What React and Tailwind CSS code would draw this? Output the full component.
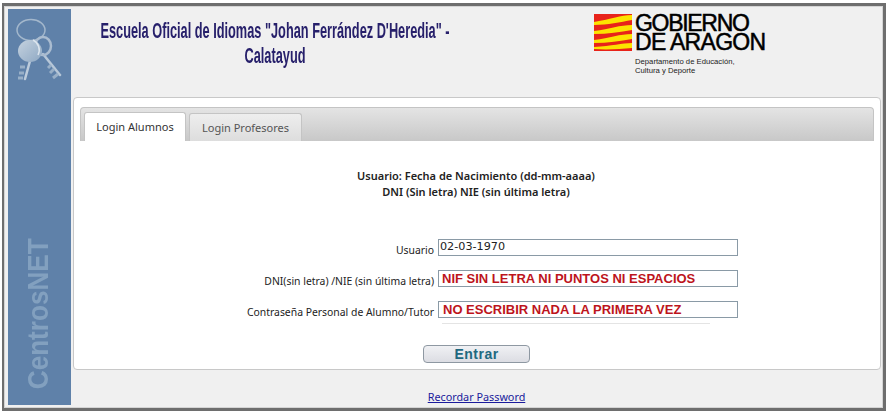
const labelFont = "font-['Noto_Sans',sans-serif]";

function KeysIcon() {
  return (
    <svg width="50" height="72" viewBox="0 0 50 72" fill="none" className="mt-[6px] ml-[8px] blur-[0.5px]">
      <defs>
        <linearGradient id="keyFill" x1="0" y1="0" x2="1" y2="1">
          <stop offset="0" stopColor="#c5d2df" />
          <stop offset="1" stopColor="#8ea8c3" />
        </linearGradient>
      </defs>
      {/* ring */}
      <ellipse cx="15" cy="15" rx="14" ry="10.5" stroke="#a3b7cc" strokeWidth="1.5" />
      {/* right key */}
      <path d="M27 39 L44 60" stroke="#b7c7d8" strokeWidth="2.5" strokeLinecap="round" />
      <path d="M35 50 l-3 3 M38 54 l-4 4 M42 59 l-5 4" stroke="#98afc7" strokeWidth="3" />
      <ellipse cx="27" cy="31" rx="8" ry="9" stroke="#aabcd0" strokeWidth="2.5" />
      {/* left key */}
      <path d="M14 46 L9 64" stroke="#bccbdb" strokeWidth="2.5" strokeLinecap="round" />
      <path d="M9 52 h-5 M8 58 h-5 M7 63 h-5" stroke="#98afc7" strokeWidth="3" />
      <ellipse cx="14" cy="36" rx="12" ry="11" fill="url(#keyFill)" />
      <path d="M17 25 a11 11 0 0 1 5 15" stroke="#dbe4ed" strokeWidth="1.5" />
    </svg>
  );
}

function AragonFlag() {
  return (
    <svg width="38" height="37" viewBox="0 0 38 37" className="shrink-0">
      <rect width="38" height="37" fill="#e8231a" />
      <path d="M38 1 C26 1 18 5 0 8 V11 C14 11 26 8 38 6 Z" fill="#fce300" />
      <path d="M38 11 C26 11 16 15 0 17 V20 C14 20 26 18 38 16 Z" fill="#fce300" />
      <path d="M38 20 C26 20 16 24 0 26 V29 C14 29 26 27 38 25 Z" fill="#fce300" />
      <path d="M38 29 C28 29 18 32 0 33 V35 C14 36 26 35 38 34 Z" fill="#fce300" />
    </svg>
  );
}

function FormRow({ label, children }) {
  return (
    <div className="flex items-end h-[17px]">
      <label className={`w-[358px] pr-[4px] text-right text-[10.4px] leading-[11px] text-[#222] whitespace-nowrap ${labelFont}`}>
        {label}
      </label>
      <div className="w-[300px] h-[17px] border border-[#8a9aa6] bg-white flex items-center overflow-hidden">
        {children}
      </div>
    </div>
  );
}

export default function App() {
  return (
    <div className="w-[889px] h-[413px] bg-white overflow-hidden pt-[3px] pl-[2px] pr-[3px] pb-[2px]">
      <div className="h-[408px] border-[3px] border-l-[2px] border-[#6e6e6e] shadow-[inset_0_0_0_1px_#d4d4d4] bg-[#f0f0f0] pt-[3px] pl-[4px] flex">
        <aside className="w-[63px] h-[396px] bg-[#5f81a9] flex flex-col justify-between shrink-0">
          <KeysIcon />
          <div className="self-start ml-[13px] mb-[7px] [writing-mode:vertical-rl] rotate-180 scale-y-[0.9] font-['Liberation_Sans',sans-serif] font-bold text-[29px] leading-[34px] text-[#82a0bf]">
            CentrosNET
          </div>
        </aside>

        <main className="flex-1 pl-[2px] pr-[2px]">
          <header className="h-[88px] flex">
            <div className="w-[404px] shrink-0 pt-[9px] text-center font-['Liberation_Sans',sans-serif] font-bold text-[#27206b] text-[22px] leading-[25px]">
              <div className="-mx-[120px] whitespace-nowrap scale-x-[0.58] origin-center">Escuela Oficial de Idiomas "Johan Ferrández D'Heredia" -</div>
              <div className="-mx-[120px] scale-x-[0.58] origin-center">Calatayud</div>
            </div>
            <div className="ml-[117px] pt-[5px] flex gap-[3px]">
              <AragonFlag />
              <div className="font-['Liberation_Sans',sans-serif] text-black">
                <div className="text-[23px] leading-[19px] tracking-[-1.3px] [-webkit-text-stroke:0.5px_black] whitespace-nowrap">GOBIERNO</div>
                <div className="text-[23px] leading-[19px] tracking-[-0.7px] [-webkit-text-stroke:0.5px_black] whitespace-nowrap">DE ARAGON</div>
                <div className="text-[7.7px] leading-[9px] mt-[5px] text-[#222] whitespace-nowrap">Departamento de Educación,<br />Cultura y Deporte</div>
              </div>
            </div>
          </header>

          <section className="h-[273px] bg-white border border-[#c8c8c8] rounded-[4px] pt-[9px] px-[6px]">
            <div className="h-[34px] border border-[#c4c4c4] border-b-0 rounded-t-[4px] bg-gradient-to-b from-[#e4e4e4] to-[#c8c8c8] pt-[4px] pl-[3px] flex gap-[3px] items-end">
              <div className={`w-[102px] h-[29px] bg-white border border-[#c4c4c4] border-b-0 rounded-t-[3px] text-center text-[11px] leading-[28px] text-[#333] ${labelFont}`}>
                Login Alumnos
              </div>
              <div className={`w-[113px] h-[28px] bg-gradient-to-b from-[#eeeeee] to-[#dddddd] border border-[#c4c4c4] border-b-0 rounded-t-[3px] text-center text-[11px] leading-[27px] text-[#555] ${labelFont}`}>
                Login Profesores
              </div>
            </div>

            <div className={`mt-[27px] pr-[2px] text-center text-[11px] leading-[16px] font-semibold text-[#222] ${labelFont}`}>
              <p>Usuario: Fecha de Nacimiento (dd-mm-aaaa)</p>
              <p>DNI (Sin letra) NIE (sin última letra)</p>
            </div>

            <div className="mt-[39px] flex flex-col gap-[14px]">
              <FormRow label="Usuario">
                <span className="pl-[1px] text-[11.2px] text-[#222] font-['DejaVu_Sans',sans-serif]">02-03-1970</span>
              </FormRow>
              <FormRow label="DNI(sin letra) /NIE (sin última letra)">
                <span className="pl-[3px] text-[13px] font-bold text-[#bd141c] font-['Liberation_Sans',sans-serif] whitespace-nowrap">NIF SIN LETRA NI PUNTOS NI ESPACIOS</span>
              </FormRow>
              <FormRow label="Contraseña Personal de Alumno/Tutor">
                <span className="pl-[4px] text-[13px] font-bold text-[#bd141c] font-['Liberation_Sans',sans-serif] whitespace-nowrap">NO ESCRIBIR NADA LA PRIMERA VEZ</span>
              </FormRow>
            </div>
            <div className="ml-[362px] mt-[5px] w-[268px] h-px bg-[#e4e4e4]" />

            <div className="mt-[21px] ml-[343px] w-[107px] h-[18px] border border-[#8e98a2] rounded-[4px] bg-gradient-to-b from-[#f0f1f4] to-[#dcdde3] text-center text-[14px] leading-[17px] font-bold tracking-[0.5px] text-[#20687f] font-['Liberation_Sans',sans-serif]">
              Entrar
            </div>
          </section>

          <div className="mt-[13px] pr-[1px] text-center">
            <a href="#" className={`text-[10.8px] leading-[14px] text-[#1a1a9c] underline ${labelFont}`}>Recordar Password</a>
          </div>
        </main>
      </div>
    </div>
  );
}
